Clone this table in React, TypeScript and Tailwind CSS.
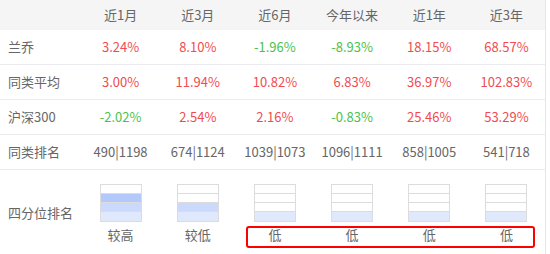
const cols = ["近1月", "近3月", "近6月", "今年以来", "近1年", "近3年"];

type Cell = { v: string; c: "r" | "g" | "n" };

const rows: { name: string; cells: Cell[] }[] = [
  {
    name: "兰乔",
    cells: [
      { v: "3.24%", c: "r" },
      { v: "8.10%", c: "r" },
      { v: "-1.96%", c: "g" },
      { v: "-8.93%", c: "g" },
      { v: "18.15%", c: "r" },
      { v: "68.57%", c: "r" },
    ],
  },
  {
    name: "同类平均",
    cells: [
      { v: "3.00%", c: "r" },
      { v: "11.94%", c: "r" },
      { v: "10.82%", c: "r" },
      { v: "6.83%", c: "r" },
      { v: "36.97%", c: "r" },
      { v: "102.83%", c: "r" },
    ],
  },
  {
    name: "沪深300",
    cells: [
      { v: "-2.02%", c: "g" },
      { v: "2.54%", c: "r" },
      { v: "2.16%", c: "r" },
      { v: "-0.83%", c: "g" },
      { v: "25.46%", c: "r" },
      { v: "53.29%", c: "r" },
    ],
  },
  {
    name: "同类排名",
    cells: [
      { v: "490|1198", c: "n" },
      { v: "674|1124", c: "n" },
      { v: "1039|1073", c: "n" },
      { v: "1096|1111", c: "n" },
      { v: "858|1005", c: "n" },
      { v: "541|718", c: "n" },
    ],
  },
];

// quartile: how many cells filled from the bottom
const quartiles = [
  { label: "较高", level: 3 },
  { label: "较低", level: 2 },
  { label: "低", level: 1 },
  { label: "低", level: 1 },
  { label: "低", level: 1 },
  { label: "低", level: 1 },
];

const colorClass = {
  r: "text-[#f24b4f]",
  g: "text-[#4cc24c]",
  n: "text-[#666]",
};

// fill colours top -> bottom (index 0 = top cell)
const fills = ["bg-[#a9c1fb]", "bg-[#b3c8fb]", "bg-[#cad9fc]", "bg-[#e0e8fc]"];

function QuartileBox({ level }: { level: number }) {
  return (
    <div className="w-[42px] border border-[#dcdcdc] flex flex-col">
      {[0, 1, 2, 3].map((i) => {
        const filled = i >= 4 - level;
        return (
          <div
            key={i}
            className={`h-[9px] ${i < 3 ? "border-b border-[#dcdcdc]" : ""} ${filled ? fills[i] : "bg-white"}`}
          />
        );
      })}
    </div>
  );
}

export default function App() {
  return (
    <div
      className="w-[550px] h-[254px] bg-white overflow-hidden text-[13px] text-[#666]"
      style={{ fontFamily: '"Noto Sans CJK SC", sans-serif' }}
    >
      <div className="relative w-[546px] border-r border-[#e6e6e6]">
        {/* header */}
        <div className="grid grid-cols-[82px_repeat(6,1fr)] h-[30px] bg-[#f5f5f5] items-center">
          <div />
          {cols.map((c) => (
            <div key={c} className="text-center">
              {c}
            </div>
          ))}
        </div>

        {rows.map((row) => (
          <div
            key={row.name}
            className="grid grid-cols-[82px_repeat(6,1fr)] h-[35px] items-center border-b border-[#ececf0]"
          >
            <div className="pl-[8px]">{row.name}</div>
            {row.cells.map((cell, i) => (
              <div key={i} className={`text-center ${colorClass[cell.c]}`}>
                {cell.v}
              </div>
            ))}
          </div>
        ))}

        {/* quartile row */}
        <div className="grid grid-cols-[82px_repeat(6,1fr)] h-[84px]">
          <div className="pl-[8px] flex items-center pt-[2px]">四分位排名</div>
          {quartiles.map((q, i) => (
            <div key={i} className="flex flex-col items-center pt-[14px]">
              <QuartileBox level={q.level} />
              <div className="mt-[4px] leading-[18px]">{q.label}</div>
            </div>
          ))}
        </div>

        {/* annotation */}
        <div className="absolute left-[246px] top-[226px] w-[289px] h-[22px] border-2 border-[#ff0000] rounded-[3px]" />
      </div>
    </div>
  );
}
